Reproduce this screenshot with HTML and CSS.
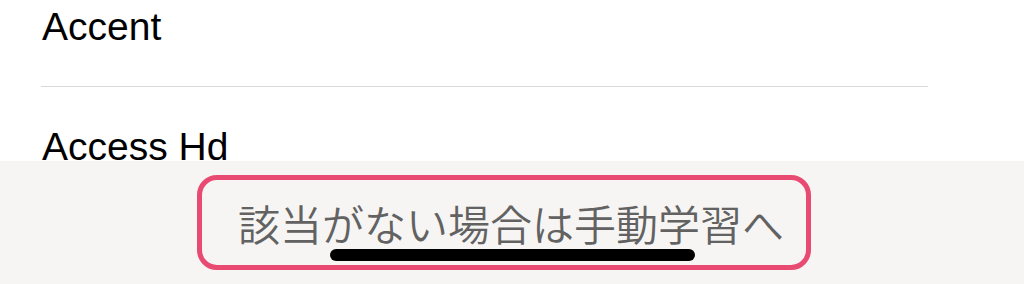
FILE: index.html
```html
<!DOCTYPE html>
<html lang="ja">
<head>
    <meta charset="UTF-8">
    <meta name="viewport" content="width=device-width, initial-scale=1.0">
    <title>辞書</title>
    <link rel="stylesheet" href="styles.css">
</head>
<body>

    <div class="word-list">
        <ul class="words">
            <li class="word">Accent</li>
            <li class="word">Access Hd</li>
        </ul>
    </div>

    <div class="footer">
        <button class="manual-btn">該当がない場合は手動学習へ</button>
    </div>

    <div class="home-indicator"></div>

</body>
</html>
```

FILE: styles.css
```css
* {
    margin: 0;
    padding: 0;
    box-sizing: border-box;
}

body {
    font-family: 'Liberation Sans', 'Noto Sans CJK JP', sans-serif;
    background: #fff;
    width: 1024px;
    height: 284px;
    overflow: hidden;
    position: relative;
}

.word-list {
    height: 161px;
    overflow: hidden;
}

.words {
    list-style: none;
    margin-top: -33px;
}

.word {
    height: 120px;
    margin: 0 96px 0 41px;
    padding-left: 1px;
    border-bottom: 1px solid #d9d9d9;
    display: flex;
    align-items: center;
    font-size: 39px;
    color: #000;
}

.footer {
    height: 123px;
    background: #f6f5f3;
    display: flex;
    align-items: center;
    padding-left: 197px;
}

.manual-btn {
    width: 614px;
    height: 95px;
    border: 5px solid #e84a72;
    border-radius: 20px;
    background: #f6f5f3;
    padding: 0 22px 0 36px;
    font-family: 'Noto Sans CJK JP', sans-serif;
    font-size: 42px;
    font-weight: 350;
    color: #626262;
    white-space: nowrap;
}

.home-indicator {
    position: absolute;
    left: 330px;
    top: 249px;
    width: 365px;
    height: 12px;
    border-radius: 6px;
    background: #000;
}
```
